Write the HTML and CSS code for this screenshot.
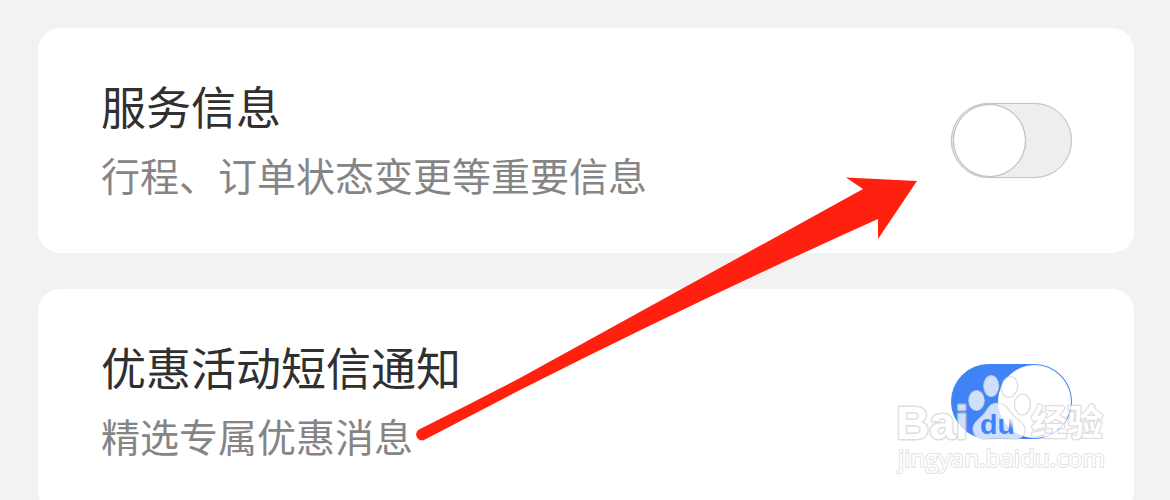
FILE: index.html
```html
<!DOCTYPE html>
<html lang="zh-CN">
<head>
    <meta charset="UTF-8">
    <title>消息通知设置</title>
    <link rel="stylesheet" href="styles.css">
</head>
<body>
    <main class="settings">
        <section class="card">
            <div class="card-text">
                <h2 class="card-title">服务信息</h2>
                <p class="card-desc">行程、订单状态变更等重要信息</p>
            </div>
            <div class="switch" role="switch" aria-checked="false">
                <span class="knob"></span>
            </div>
        </section>

        <section class="card">
            <div class="card-text">
                <h2 class="card-title">优惠活动短信通知</h2>
                <p class="card-desc">精选专属优惠消息</p>
            </div>
            <div class="switch switch-on" role="switch" aria-checked="true">
                <span class="knob"></span>
            </div>
        </section>
    </main>

    <!-- Arrow to the first switch -->
    <svg class="overlay" viewBox="0 0 1170 500">
        <path fill="#ff2010" d="M419 429.500 Q470 404 520 378 L863 189 L846 177.500 L917 181 L878 239 L878 219 Q700 299 520 390 L425 439.500 A5.700 5.700 0 0 1 419 429.500 Z"/>
    </svg>

    <!-- Watermark -->
    <svg class="overlay watermark" viewBox="0 0 1170 500">
        <defs>
            <!-- The letters show the switch below: blue track, then white knob -->
            <linearGradient id="du-fill" gradientUnits="userSpaceOnUse" x1="1004" y1="430" x2="1014" y2="422">
                <stop offset="0.5" stop-color="#3f83f6"/>
                <stop offset="0.9" stop-color="#e4e8f0"/>
            </linearGradient>
        </defs>
        <text class="wm-logo" x="896" y="439" textLength="72" lengthAdjust="spacingAndGlyphs">Bai</text>
        <g class="wm-paw">
            <ellipse cx="991.200" cy="386" rx="7.500" ry="10.500"/>
            <ellipse cx="976.500" cy="400.500" rx="7.800" ry="10"/>
            <ellipse cx="1009.500" cy="387" rx="8" ry="10.500" transform="rotate(12 1009.500 387)"/>
            <ellipse cx="1022.500" cy="404.500" rx="8" ry="10.500"/>
            <path d="M998 403 C1005 403 1008 409 1013 415 C1019 421 1026 424 1025 431 C1024 438 1018 440 1010 439 C1002 438 995 438 987 439 C979 440 974 437 973 430 C972 422 982 418 986 411 C990 405 992 403 998 403 Z"/>
        </g>
        <text class="wm-du" x="980" y="434" textLength="35" lengthAdjust="spacingAndGlyphs">du</text>
        <text class="wm-cjk" x="1031" y="436">经验</text>
        <text class="wm-url" x="898" y="467" textLength="207" lengthAdjust="spacingAndGlyphs">jingyan.baidu.com</text>
    </svg>
</body>
</html>
```

FILE: styles.css
```css
* {
    margin: 0;
    padding: 0;
    box-sizing: border-box;
}

body {
    font-family: "Noto Sans CJK SC", sans-serif;
    background: #f2f2f2;
    height: 500px;
    overflow: hidden;
}

.settings {
    display: flex;
    flex-direction: column;
    gap: 36px;
    padding: 28px 36px 0 38px;
}

.card {
    display: flex;
    align-items: center;
    justify-content: space-between;
    height: 225px;
    padding: 0 62px 0 63px;
    background: #fff;
    border-radius: 22px;
}

.card-title {
    font-size: 45px;
    font-weight: 400;
    line-height: 66px;
    color: #303030;
}

.card-desc {
    margin-top: 2px;
    padding-bottom: 2px;
    font-size: 39px;
    font-weight: 400;
    line-height: 66px;
    color: #858585;
}

.switch {
    display: flex;
    width: 121px;
    height: 75px;
    background: #eee;
    border: 1px solid #c4c4c4;
    border-radius: 38px;
    box-shadow: 0 0 1px #ccc;
}

.knob {
    width: 73px;
    height: 73px;
    margin-left: 1px;
    background: #fff;
    border: 1px solid #bbb;
    border-radius: 50%;
    box-shadow: 0 0 1px #ccc;
}

.switch-on {
    justify-content: flex-end;
    background: #3f83f6;
    border-color: #3f83f6;
    box-shadow: none;
}

.switch-on .knob {
    border-color: #fff;
    box-shadow: none;
}

.overlay {
    position: absolute;
    top: 0;
    left: 0;
    width: 1170px;
    height: 500px;
}

.watermark text {
    fill: #fff;
    stroke: #d4d4d4;
    stroke-width: 3px;
    stroke-linejoin: round;
    paint-order: stroke;
    opacity: 0.75;
}

.wm-paw {
    fill: rgba(255, 255, 255, 0.75);
    stroke: rgba(205, 205, 205, 0.7);
    stroke-width: 1.2px;
}

.watermark .wm-logo {
    font: bold 47px "Liberation Sans", sans-serif;
}

.watermark .wm-du {
    font: bold 28px "Liberation Sans", sans-serif;
    fill: url(#du-fill);
    stroke: none;
    opacity: 1;
}

.watermark .wm-cjk {
    font: bold 36px "Noto Sans CJK SC", sans-serif;
    stroke-width: 2.5px;
}

.watermark .wm-url {
    font: 24px "Open Sans", "Noto Sans", sans-serif;
    stroke: #dadada;
    stroke-width: 2px;
}
```
